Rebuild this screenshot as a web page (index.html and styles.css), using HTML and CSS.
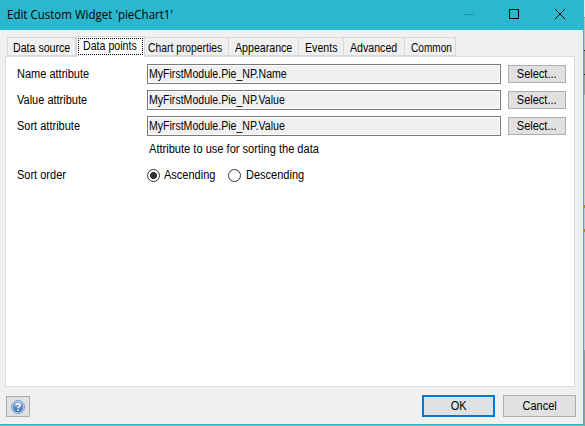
FILE: index.html
```
<!DOCTYPE html>
<html lang="en">
<head>
<meta charset="utf-8">
<title>Edit Custom Widget</title>
<link rel="stylesheet" href="styles.css">
</head>
<body>
<div class="screen">
<main class="dialog">
  <header class="titlebar">
    <h1><span class="title">Edit Custom Widget 'pieChart1'</span></h1>
    <svg class="controls" width="114" height="30" viewBox="0 0 114 30" fill="none" shape-rendering="crispEdges">
      <path d="M0 14.500h10" stroke="#2590a3"/>
      <rect x="45.500" y="9.500" width="9" height="9" stroke="#000"/>
      <path d="M91 9l10 10M101 9l-10 10" stroke="#000" shape-rendering="auto"/>
    </svg>
  </header>
  <nav class="tabs">
    <div class="tab source"><span class="t">Data source</span></div>
    <div class="tab points active"><span class="t">Data points</span></div>
    <div class="tab chart"><span class="t">Chart properties</span></div>
    <div class="tab appearance"><span class="t">Appearance</span></div>
    <div class="tab events"><span class="t">Events</span></div>
    <div class="tab advanced"><span class="t">Advanced</span></div>
    <div class="tab common"><span class="t">Common</span></div>
  </nav>
  <section class="panel">
    <div class="row"><label><span class="t">Name attribute</span></label><div class="field"><span class="t">MyFirstModule.Pie_NP.Name</span></div><button class="select"><span class="t mid">Select...</span></button></div>
    <div class="row"><label><span class="t">Value attribute</span></label><div class="field"><span class="t">MyFirstModule.Pie_NP.Value</span></div><button class="select"><span class="t mid">Select...</span></button></div>
    <div class="row"><label><span class="t">Sort attribute</span></label><div class="field"><span class="t">MyFirstModule.Pie_NP.Value</span></div><button class="select"><span class="t mid">Select...</span></button></div>
    <p class="hint"><span class="t">Attribute to use for sorting the data</span></p>
    <div class="row order">
      <label><span class="t">Sort order</span></label>
      <div class="option asc"><i class="radio on"></i><span class="t">Ascending</span></div>
      <div class="option desc"><i class="radio"></i><span class="t">Descending</span></div>
    </div>
  </section>
  <footer class="footer">
    <button class="help" aria-label="Help">
      <svg width="14" height="14" viewBox="0 0 14 14">
        <defs><linearGradient id="g" x2="0" y2="1"><stop stop-color="#8bb1de"/><stop offset="1" stop-color="#3d70b5"/></linearGradient></defs>
        <circle cx="7" cy="7" r="6.500" fill="#c5d8ee" stroke="#7599c9"/>
        <circle cx="7" cy="7" r="5.300" fill="url(#g)"/>
        <path d="M5 5.500c0-2.500 4-2.400 4-.2 0 1.500-2 1.400-2 3M7 9.500v1.500" fill="none" stroke="#fff" stroke-width="1.500"/>
      </svg>
    </button>
    <button class="action ok"><span class="t mid">OK</span></button>
    <button class="action"><span class="t mid">Cancel</span></button>
  </footer>
</main>
<aside class="backdrop"></aside>
</div>
</body>
</html>
```
FILE: styles.css
```
* { box-sizing: border-box; }
body { margin: 0; font: 12px/14px "Liberation Sans", Arial, sans-serif; color: #000; overflow: hidden; }
h1, p { margin: 0; font: inherit; }
button { margin: 0; padding: 0; font: inherit; color: inherit; border: 1px solid #adadad; background: #e1e1e1; display: flex; align-items: center; justify-content: center; }
.screen { width: 585px; height: 426px; display: flex; background: #a5a9a6; }
.dialog { width: 584px; height: 425px; background: #f0f0f0; border-right: 1px solid #2bb8ce; border-bottom: 1px solid #2bb8ce; flex: none; }
.backdrop { width: 1px; background: linear-gradient(#d8e8ee 0 17px, #8c9698 17px 18px, #b5c4c8 18px 50px, #222 50px 51px, #9da3a3 51px 74px, #222 74px 75px, #9da3a3 75px 95px, #c8d2d4 95px 205px, #b8861b 205px 208px, #b9cdd5 208px 229px, #b8861b 229px 232px, #b9cdd5 232px 350px, #8fa0a3 350px); }
.t { display: inline-block; white-space: pre; transform: scaleX(.917); transform-origin: left; }
.t.mid { transform-origin: center; }
.titlebar { height: 30px; background: #2bb8ce; padding-left: 7px; display: flex; justify-content: space-between; }
.titlebar h1 { font: 12px/29px "Open Sans", sans-serif; }
.title { display: inline-block; white-space: pre; transform: scaleX(.96); transform-origin: left; }
.controls { margin-right: 5px; }
.tabs { height: 27px; margin: 0 0 -1px 7px; display: flex; align-items: flex-end; position: relative; }
.tab { height: 19px; border: 1px solid #d9d9d9; border-left: 0; padding: 3px 0 0 5px; flex: none; margin-bottom: 1px; }
.tab .t { transform: scaleX(.885); }
.source { width: 69px; border-left: 1px solid #d9d9d9; }
.active { width: 69px; height: 21px; margin-bottom: 0; border-left: 1px solid #d9d9d9; border-bottom: 0; background: #fff; padding: 2px 0 0 6px; outline: 1px dotted #000; outline-offset: -3px; }
.chart { width: 84px; padding-left: 3px; }
.chart .t { transform: scaleX(.862); }
.appearance { width: 70px; padding-left: 6px; }
.events { width: 45px; padding-left: 6px; }
.advanced { width: 61px; padding-left: 6px; }
.common { width: 51px; padding-left: 6px; }
.common .t { transform: scaleX(.84); }
.panel { width: 570px; height: 331px; margin-left: 5px; border: 1px solid #dcdcdc; background: #fff; padding: 7px 0 0 11px; }
.row { display: flex; height: 20px; margin-bottom: 6px; align-items: center; }
label { width: 130px; flex: none; display: flex; }
.field { width: 354px; height: 20px; border: 1px solid #7a7a7a; background: #f0f0f0; box-shadow: inset 0 0 0 1px #fff; padding: 2px 0 0 1px; }
.field .t { transform: scaleX(.88); }
.select { width: 58px; height: 18px; margin-left: 7px; }
.hint { margin: 0 0 9px 132px; height: 14px; }
.hint .t { transform: scaleX(.923); }
.order { height: 20px; }
.option { display: flex; align-items: center; gap: 4px; }
.asc { width: 81px; }
.desc { gap: 5px; }
.radio { width: 13px; height: 13px; border: 1px solid #333; border-radius: 50%; flex: none; }
.on { background: radial-gradient(circle, #333 0 3.200px, #fff 3.900px); }
.footer { display: flex; padding: 8px 7px 0 6px; }
.help { width: 24px; height: 21px; margin: 1px auto 0 0; }
.action { width: 73px; height: 22px; margin-left: 8px; }
.ok { border: 2px solid #0078d7; }
```
